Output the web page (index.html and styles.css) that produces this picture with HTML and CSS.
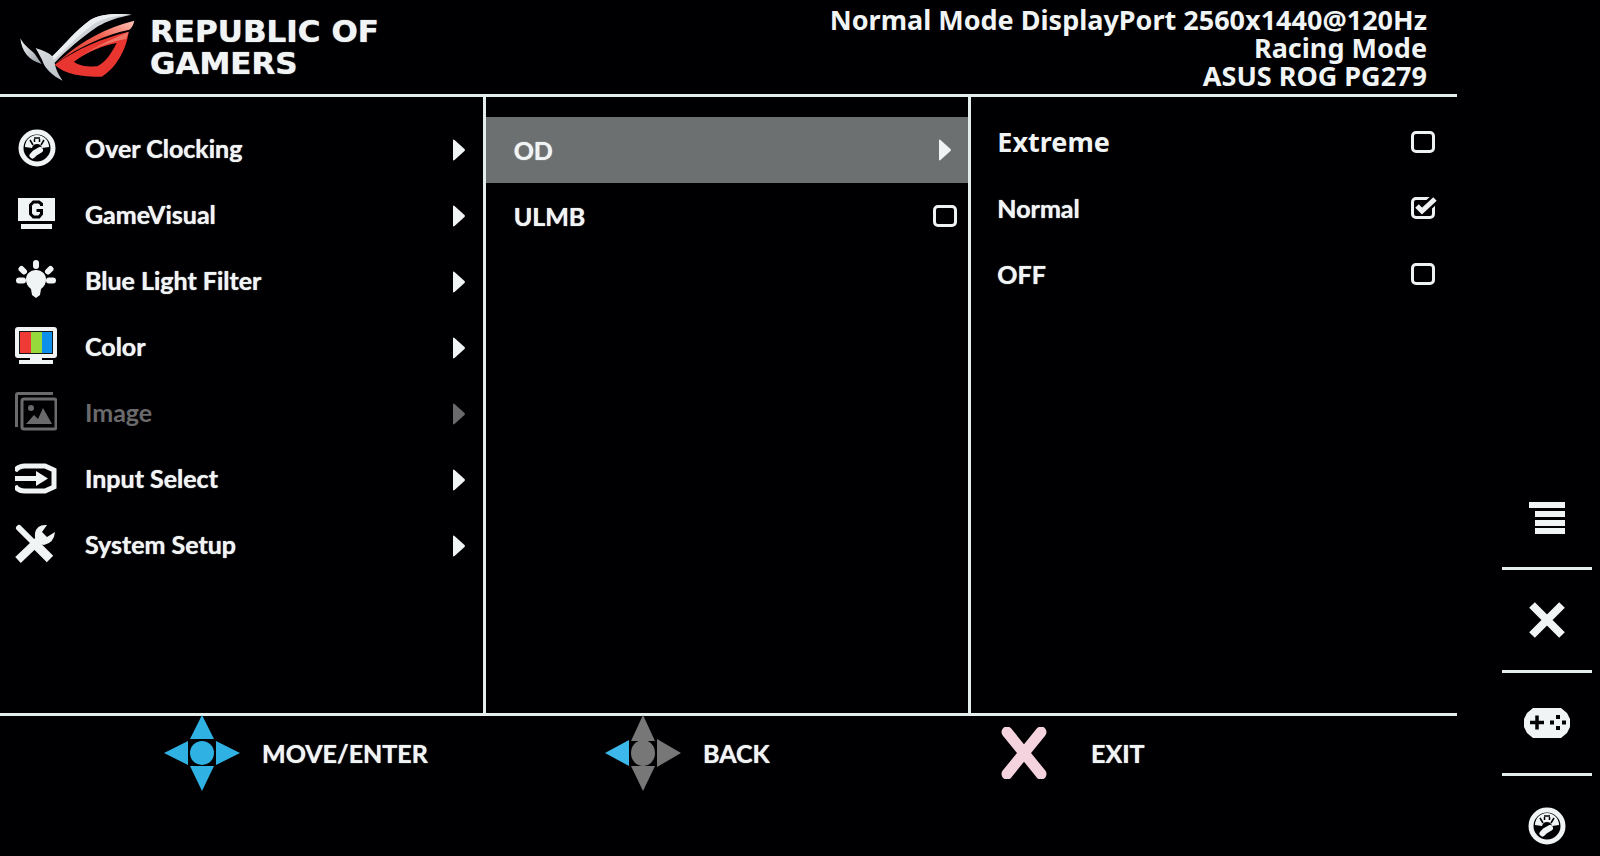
FILE: index.html
```html
<!DOCTYPE html>
<html lang="en">
<head>
    <meta charset="UTF-8">
    <meta name="viewport" content="width=device-width, initial-scale=1.0">
    <title>ROG OSD Menu</title>
    <link rel="stylesheet" href="styles.css">
</head>
<body>
    <!-- shared shapes -->
    <svg class="defs" width="0" height="0" aria-hidden="true">
        <symbol id="arrow" viewBox="0 0 14 22">
            <path d="M1 1.5Q1 0 2.5 1L12.500 10Q13.500 11 12.500 12L2.500 21Q1 22 1 20.500Z" fill="currentColor"/>
        </symbol>
        <symbol id="gauge" viewBox="0 0 38 38">
            <circle cx="19" cy="19" r="16" fill="none" stroke="currentColor" stroke-width="5"/>
            <path d="M7 18A12 12 0 0 1 31 18L24 19Q23 15 19 15Q15 15 14 19Z" fill="currentColor"/>
            <path d="M12 11L15 16M26 11L23 16M16.500 10V13M21.500 10V13M16 9H22" stroke="#000002" stroke-width="1.500"/>
            <path d="M14 27L18 23.500L22 20.500" fill="none" stroke="#000002" stroke-width="9"/>
            <path d="M14.500 26.500L17 24L22 21" fill="none" stroke="currentColor" stroke-width="6" stroke-linecap="round"/>
        </symbol>
    </svg>

    <div class="screen">
        <main class="osd">
            <header class="header">
                <div class="brand">
                    <svg class="brand-logo" viewBox="50 35 354 210" aria-hidden="true">
                        <defs>
                            <linearGradient id="silver" x1="0" y1="0" x2="1" y2="1">
                                <stop offset="0" stop-color="#f4f6f8"/>
                                <stop offset="0.5" stop-color="#c6cbd0"/>
                                <stop offset="1" stop-color="#8f979e"/>
                            </linearGradient>
                            <linearGradient id="red" x1="1" y1="0" x2="0" y2="1">
                                <stop offset="0" stop-color="#ffc4b8"/>
                                <stop offset="0.4" stop-color="#f0604f"/>
                                <stop offset="1" stop-color="#d82a2a"/>
                            </linearGradient>
                        </defs>
                        <path d="M57 114C68 138 96 152 104 166L121 191C82 180 61 154 57 114Z" fill="url(#silver)"/>
                        <path d="M103 143C124 151 143 156 153 168C190 132 225 88 268 58C300 40 345 39 391 43C350 51 318 61 290 78C240 112 196 150 160 187C163 208 174 226 184 241C154 226 130 205 122 178Z" fill="url(#silver)"/>
                        <path d="M153 168C190 132 225 88 268 58C300 40 345 39 391 43C340 46 305 53 277 71C230 105 190 150 158 178Z" fill="#eceff1"/>
                        <path d="M160 193C225 146 305 113 382 94C376 145 345 203 301 229C240 229 190 222 160 193ZM218 184C232 196 262 200 288 198C312 186 330 160 346 128C310 134 255 155 218 184Z" fill="#e8352f" fill-rule="evenodd"/>
                        <path d="M218 184C270 142 325 120 382 94L374 116C325 124 262 148 218 184Z" fill="#ee7263"/>
                        <path d="M184 172C245 120 310 84 399 61C396 75 390 84 384 88C315 102 240 135 162 190Z" fill="url(#red)"/>
                    </svg>
                    <h1 class="brand-name">REPUBLIC OF<br>GAMERS</h1>
                </div>
                <div class="status">
                    <p>Normal Mode DisplayPort 2560x1440@120Hz</p>
                    <p>Racing Mode</p>
                    <p>ASUS ROG PG279</p>
                </div>
            </header>

            <div class="columns">
                <nav class="column menu">
                    <button class="row" type="button">
                        <svg class="icon" viewBox="0 0 42 46"><use href="#gauge" x="3" y="2" width="38" height="38"/></svg>
                        <span class="label">Over Clocking</span>
                        <svg class="arrow"><use href="#arrow"/></svg>
                    </button>
                    <button class="row" type="button">
                        <svg class="icon" viewBox="0 0 42 46">
                            <path d="M3 5H40V28H3ZM6 31H37V36H6Z" fill="currentColor"/>
                            <path d="M26.500 13V11L24 9H18.500L15.500 12V21L18.500 24H24L26.500 21V17.500H21.500" fill="none" stroke="#000002" stroke-width="3"/>
                        </svg>
                        <span class="label">GameVisual</span>
                        <svg class="arrow"><use href="#arrow"/></svg>
                    </button>
                    <button class="row" type="button">
                        <svg class="icon" viewBox="0 0 42 46">
                            <path d="M21 11A9.500 9.500 0 0 0 11 21Q11 26 16 30L17 36L21 39L25 36L26 30Q31 26 31 21A9.500 9.500 0 0 0 21 11Z" fill="currentColor"/>
                            <path d="M21 4V7M6.500 10L9 12.500M35.500 10L33 12.500M4 21.500H8M34 21.500H38" stroke="currentColor" stroke-width="6" stroke-linecap="round"/>
                        </svg>
                        <span class="label">Blue Light Filter</span>
                        <svg class="arrow"><use href="#arrow"/></svg>
                    </button>
                    <button class="row" type="button">
                        <svg class="icon" viewBox="0 0 42 46">
                            <rect x="0" y="2" width="42" height="31" rx="3" fill="currentColor"/>
                            <rect x="4" y="6" width="34" height="23" fill="#15151a"/>
                            <path d="M5 7H16V28H5Z" fill="#f03a36"/>
                            <path d="M16 7H27V28H16Z" fill="#96d93a"/>
                            <path d="M27 7H37V28H27Z" fill="#0d8fea"/>
                            <path d="M15 33H27V35H38V39H4V35H15Z" fill="currentColor"/>
                        </svg>
                        <span class="label">Color</span>
                        <svg class="arrow"><use href="#arrow"/></svg>
                    </button>
                    <button class="row" type="button" disabled>
                        <svg class="icon" viewBox="0 0 42 46">
                            <path d="M1.500 36V4Q1.500 2.500 3 2.500H38" fill="none" stroke="currentColor" stroke-width="3"/>
                            <rect x="7" y="8" width="34" height="30" rx="2" fill="none" stroke="currentColor" stroke-width="3"/>
                            <circle cx="16" cy="17" r="3" fill="currentColor"/>
                            <path d="M11 33L19 24L23 28L28 17L37 33Z" fill="currentColor"/>
                        </svg>
                        <span class="label">Image</span>
                        <svg class="arrow"><use href="#arrow"/></svg>
                    </button>
                    <button class="row" type="button">
                        <svg class="icon" viewBox="0 0 42 46">
                            <path d="M0 14Q3 9 10 9H30L39 13V30L30 34H10Q3 34 0 29" fill="none" stroke="currentColor" stroke-width="5"/>
                            <path d="M0 19H21V14L33 21.500L21 29V24H0Z" fill="currentColor"/>
                        </svg>
                        <span class="label">Input Select</span>
                        <svg class="arrow"><use href="#arrow"/></svg>
                    </button>
                    <button class="row" type="button">
                        <svg class="icon" viewBox="0 0 42 46">
                            <path d="M4 5L21 22" stroke="currentColor" stroke-width="6" stroke-linecap="round"/>
                            <path d="M22 23L35 36" stroke="currentColor" stroke-width="9"/>
                            <path d="M3 37L24 17" stroke="currentColor" stroke-width="8"/>
                            <path d="M32 2Q22 1 20 10Q19 21 29 22Q39 20 40 9L32 14L27 9Z" fill="currentColor"/>
                        </svg>
                        <span class="label">System Setup</span>
                        <svg class="arrow"><use href="#arrow"/></svg>
                    </button>
                </nav>

                <section class="column submenu">
                    <button class="row selected" type="button">
                        <span class="label">OD</span>
                        <svg class="arrow"><use href="#arrow"/></svg>
                    </button>
                    <label class="row" for="ulmb">
                        <span class="label">ULMB</span>
                        <span class="check"><input type="checkbox" id="ulmb"><svg class="tick" viewBox="0 0 28 28"><path d="M7 11L12 16L25 4"/></svg></span>
                    </label>
                </section>

                <section class="column options">
                    <label class="row" for="odExtreme">
                        <span class="label wide">Extreme</span>
                        <span class="check"><input type="radio" name="od" id="odExtreme"><svg class="tick" viewBox="0 0 28 28"><path d="M7 11L12 16L25 4"/></svg></span>
                    </label>
                    <label class="row" for="odNormal">
                        <span class="label">Normal</span>
                        <span class="check"><input type="radio" name="od" id="odNormal" checked><svg class="tick" viewBox="0 0 28 28"><path class="tick-gap" d="M12 16L26 3"/><path d="M7 11L12 16L25 4"/></svg></span>
                    </label>
                    <label class="row" for="odOff">
                        <span class="label">OFF</span>
                        <span class="check"><input type="radio" name="od" id="odOff"><svg class="tick" viewBox="0 0 28 28"><path d="M7 11L12 16L25 4"/></svg></span>
                    </label>
                </section>
            </div>

            <footer class="footer">
                <div class="hint">
                    <svg class="pad" viewBox="0 0 76 76" fill="#2fb1e4">
                        <path d="M38 0L50 24H26ZM38 76L50 51H26ZM0 38L24 26V50ZM76 38L52 26V50Z"/>
                        <circle cx="38" cy="38" r="12"/>
                    </svg>
                    <span>MOVE/ENTER</span>
                </div>
                <div class="hint">
                    <svg class="pad" viewBox="0 0 76 76" fill="#777777">
                        <path d="M38 0L50 26H26ZM38 76L50 51H26ZM76 38L52 24V52Z"/>
                        <path d="M0 38L24 25V51Z" fill="#3cb9ea"/>
                        <ellipse cx="38" cy="38" rx="12" ry="13"/>
                    </svg>
                    <span>BACK</span>
                </div>
                <div class="hint exit">
                    <svg class="cross" viewBox="0 0 46 52">
                        <path d="M6 5L40 47M40 5L6 47" stroke="#f4d3de" stroke-width="11" stroke-linecap="round"/>
                    </svg>
                    <span>EXIT</span>
                </div>
            </footer>
        </main>

        <aside class="rail">
            <button type="button" aria-label="Menu">
                <svg viewBox="0 0 48 36"><path d="M6 3H42V9H6ZM12 12H42V18H12ZM12 21H42V27H12ZM12 29H42V35H12Z" fill="currentColor"/></svg>
            </button>
            <button type="button" aria-label="Close">
                <svg viewBox="0 0 48 36"><path d="M9 3L39 33M39 3L9 33" stroke="currentColor" stroke-width="8"/></svg>
            </button>
            <button type="button" aria-label="GamePlus">
                <svg viewBox="0 0 48 36">
                    <path d="M10 3H38L44 8L47 14V22L44 28L38 33H10L4 28L1 22V14L4 8Z" fill="currentColor"/>
                    <path d="M7 17.500H21M14 10.500V24.500" stroke="#000002" stroke-width="3.500"/>
                    <path d="M33 10H37V14H33ZM33 21H37V25H33ZM27 15.500H31V19.500H27ZM39 15.500H43V19.500H39Z" fill="#000002"/>
                </svg>
            </button>
            <button type="button" aria-label="Turbo">
                <svg viewBox="0 0 48 36"><use href="#gauge" x="5" y="-1" width="38" height="38"/></svg>
            </button>
        </aside>
    </div>
</body>
</html>
```
FILE: styles.css
```css
* { margin: 0; padding: 0; box-sizing: border-box; }
body { background: #000002; color: #f1f4f4; font-family: Lato, "Liberation Sans", sans-serif; font-size: 25px; font-weight: 700; line-height: 32px; text-shadow: 0 0 1px #f1f4f4; }
button { background: none; border: none; color: inherit; font: inherit; text-align: left; text-shadow: inherit; cursor: pointer; }
svg { display: block; flex: none; }
.defs { position: absolute; }

.screen { display: flex; min-height: 100vh; }
.osd { flex: 1; display: flex; flex-direction: column; }

/* header */
.header { display: flex; justify-content: space-between; align-items: flex-start; height: 97px; padding: 6px 30px 0 18px; border-bottom: 3px solid #e4efec; }
.brand { display: flex; gap: 14px; padding-top: 6px; }
.brand-logo { width: 118px; height: 70px; }
.brand-name { padding-top: 3px; font-family: "DejaVu Sans", sans-serif; font-size: 31px; font-weight: 700; line-height: 32px; }
.status { font-family: "Noto Sans", sans-serif; font-size: 27px; line-height: 28px; text-align: right; text-shadow: none; }

/* three menu columns */
.columns { flex: 1; display: grid; grid-template-columns: 1fr 1fr 1fr; }
.column { padding-top: 20px; border-right: 3px solid #e4efec; }
.column:last-child { border-right: none; }
.row { display: flex; align-items: center; width: 100%; height: 66px; cursor: pointer; }
.row:disabled { color: #6a6a6c; text-shadow: none; cursor: default; }
.label { flex: 1; }
.icon { width: 42px; height: 46px; }
.arrow { width: 14px; height: 22px; }
.menu .row { gap: 28px; padding: 0 17px 0 15px; }
.menu .label { padding-bottom: 4px; }
.submenu .row { padding: 0 11px 0 28px; }
.submenu .selected { padding-right: 16px; background: #6c7070; }
.options { padding-top: 12px; }
.options .row { padding: 0 22px 0 26px; }
.wide { font-family: "Noto Sans", sans-serif; font-size: 27px; text-shadow: none; }

.check { position: relative; width: 24px; height: 22px; }
.check input { display: block; width: 24px; height: 22px; appearance: none; border: 3px solid #eef2f2; border-radius: 5px; cursor: pointer; }
.tick { display: none; position: absolute; left: -1px; top: -2px; width: 28px; height: 28px; fill: none; stroke: #eef2f2; stroke-width: 5; pointer-events: none; }
.tick-gap { stroke: #000002; stroke-width: 10; }
.check input:checked + .tick { display: block; }

/* key hints */
.footer { display: grid; grid-template-columns: 441fr 396fr 456fr; height: 143px; padding-left: 164px; border-top: 3px solid #e4efec; }
.hint { display: flex; align-items: center; gap: 22px; height: 74px; }
.pad { width: 76px; height: 76px; }
.exit { gap: 44px; }
.cross { width: 46px; height: 52px; }

/* side key labels */
.rail { display: flex; flex-direction: column; justify-content: flex-end; width: 143px; padding: 0 8px 0 45px; }
.rail button { display: flex; justify-content: center; padding: 32px 0; border-bottom: 3px solid #e4efec; }
.rail button:last-child { padding-bottom: 12px; border-bottom: none; }
.rail svg { width: 48px; height: 36px; overflow: visible; }
```
